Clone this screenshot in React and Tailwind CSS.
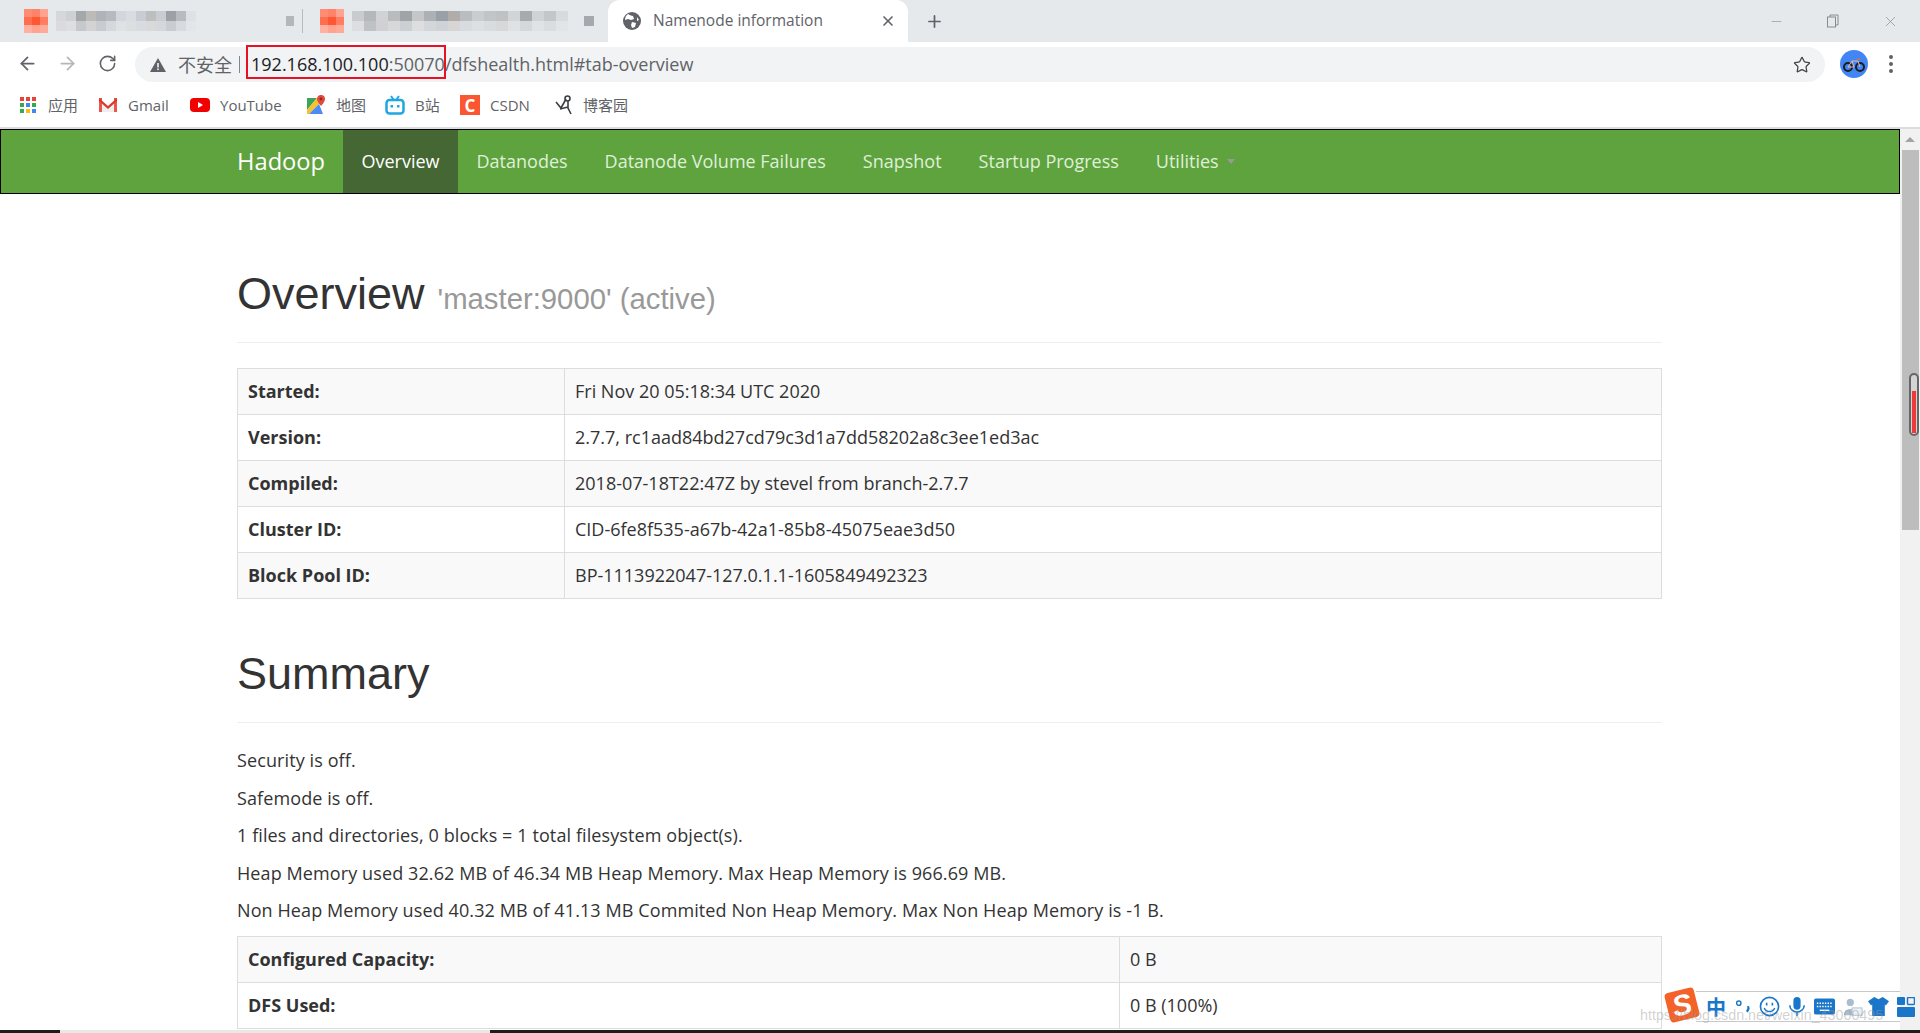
import React from 'react';
import { ArrowLeft, ArrowRight, RotateCw, Star, X, Plus, Minus } from 'lucide-react';

const uiFont = "font-['Open_Sans','Noto_Sans_CJK_SC',sans-serif]";
const headFont = "font-['Liberation_Sans','Noto_Sans_CJK_SC',sans-serif]";

const favicon = [
  'bg-[#ff8c73]', 'bg-[#ff8368]', 'bg-[#ffa28f]',
  'bg-[#ff6f4f]', 'bg-[#ff5733]', 'bg-[#ff7d60]',
  'bg-[#ffb0a0]', 'bg-[#ffa28f]', 'bg-[#ffaa98]',
];

const blurA = [
  'bg-[#d5d7da]', 'bg-[#ced1d3]', 'bg-[#a4a8aa]', 'bg-[#bcbbb8]', 'bg-[#b0b4b8]', 'bg-[#b7bac0]', 'bg-[#d3d7db]', 'bg-[#d9dce0]', 'bg-[#c9cdd3]', 'bg-[#bdbfbe]', 'bg-[#c9ccd0]', 'bg-[#9da1a6]', 'bg-[#b8bcc0]', 'bg-[#dfe2e5]',
  'bg-[#d9dbde]', 'bg-[#dcdee0]', 'bg-[#c6c9cb]', 'bg-[#d2d3d2]', 'bg-[#c8cbcf]', 'bg-[#d6d8db]', 'bg-[#dfe2e5]', 'bg-[#dcdfe2]', 'bg-[#d8dbdf]', 'bg-[#d8d9d9]', 'bg-[#d5d7da]', 'bg-[#c9ccd0]', 'bg-[#d8dbde]', 'bg-[#e3e6e9]',
];

const blurB = [
  'bg-[#c9cccf]', 'bg-[#b5b8bb]', 'bg-[#d0d2d5]', 'bg-[#b9bcbf]', 'bg-[#a0a3a7]', 'bg-[#c4c6c8]', 'bg-[#adb1b6]', 'bg-[#9aa0a8]', 'bg-[#b0acaa]', 'bg-[#b9bdc1]', 'bg-[#c9cdd0]', 'bg-[#c2c5c8]', 'bg-[#bfc1c2]', 'bg-[#d2d5d8]', 'bg-[#a8abae]', 'bg-[#d0d3d6]', 'bg-[#c4c7ca]', 'bg-[#d8dbde]',
  'bg-[#dcdee1]', 'bg-[#bfc2c5]', 'bg-[#cfd1d4]', 'bg-[#d6d8da]', 'bg-[#cdd0d3]', 'bg-[#dcdee0]', 'bg-[#d4d7da]', 'bg-[#cfd2d6]', 'bg-[#d8d6d5]', 'bg-[#d9dbde]', 'bg-[#dde0e2]', 'bg-[#d9dcde]', 'bg-[#d6d8da]', 'bg-[#dfe1e4]', 'bg-[#d5d8da]', 'bg-[#e0e3e5]', 'bg-[#dadde0]', 'bg-[#e2e5e8]',
];

function Favicon() {
  return (
    <div className="grid grid-cols-3 w-[24px] h-[24px] shrink-0">
      {favicon.map((c, i) => <div key={i} className={c} />)}
    </div>
  );
}

function GlobeIcon() {
  return (
    <svg width="18" height="18" viewBox="0 0 18 18" className="shrink-0">
      <circle cx="9" cy="9" r="9" fill="#5f6368" />
      <path d="M5 2 Q8 4 10 4 L11 7 L8 8 L5 7 L2 8 Q2 4 5 2Z M9 10 L13 11 L12 15 L9 16 L8 13Z M14 5 L16 8 L14 9Z" fill="#fff" />
    </svg>
  );
}

function RestoreIcon() {
  return (
    <svg width="14" height="14" viewBox="0 0 14 14" fill="none" stroke="#8a8a8a" strokeWidth="1">
      <rect x="1.5" y="3" width="8" height="10" />
      <path d="M4 3 V1 H12 V11 H9.5" />
    </svg>
  );
}

function WarnIcon() {
  return (
    <svg width="16" height="14" viewBox="0 0 16 14" className="shrink-0">
      <path d="M8 0 L16 14 H0Z" fill="#5f6368" />
      <rect x="7.2" y="5" width="1.6" height="4.5" fill="#f1f3f4" />
      <rect x="7.2" y="10.5" width="1.6" height="1.6" fill="#f1f3f4" />
    </svg>
  );
}

function AppsIcon() {
  const dots = ['bg-[#ea4335]', 'bg-[#ea4335]', 'bg-[#ea4335]', 'bg-[#34a853]', 'bg-[#4285f4]', 'bg-[#34a853]', 'bg-[#34a853]', 'bg-[#fbbc05]', 'bg-[#4285f4]'];
  return (
    <div className="grid grid-cols-3 gap-[2px] w-[16px] shrink-0">
      {dots.map((c, i) => <div key={i} className={`h-[4px] ${c}`} />)}
    </div>
  );
}

function GmailIcon() {
  return (
    <svg width="20" height="16" viewBox="0 0 20 16" className="shrink-0">
      <path d="M1 1 H4 V15 H1Z M16 1 H19 V15 H16Z" fill="#e9574a" />
      <path d="M4 5 L10 10 L16 5 V15 H4Z" fill="#eeeeee" />
      <path d="M1 1 L10 9 L19 1 V4 L10 12 L1 4Z" fill="#d9392c" />
    </svg>
  );
}

function YoutubeIcon() {
  return (
    <svg width="20" height="14" viewBox="0 0 20 14" className="shrink-0">
      <rect width="20" height="14" rx="4" fill="#f00000" />
      <path d="M8 4 L13 7 L8 10Z" fill="#fff" />
    </svg>
  );
}

function MapsIcon() {
  return (
    <svg width="20" height="20" viewBox="0 0 20 20" className="shrink-0">
      <path d="M1 3 L11 3 L1 15Z" fill="#3fa35c" />
      <path d="M1 15 L11 3 L13 9 L3 19 L1 19Z" fill="#f5c32c" />
      <path d="M3 19 L13 9 L17 19Z" fill="#4c8bf5" />
      <path d="M15 0 C12 0 11 2.500 11 4 C11 7 15 11 15 11 C15 11 19 7 19 4 C19 2 18 0 15 0Z" fill="#e2483c" />
      <circle cx="15" cy="4" r="1.400" fill="#8e2a22" />
    </svg>
  );
}

function BiliIcon() {
  return (
    <svg width="20" height="20" viewBox="0 0 20 20" fill="none" className="shrink-0">
      <rect x="1.500" y="5" width="17" height="13.500" rx="3" stroke="#1ea7e0" strokeWidth="2.500" />
      <path d="M6 1 L8.500 4.500 M14 1 L11.500 4.500" stroke="#1ea7e0" strokeWidth="2" />
      <rect x="5.500" y="10" width="2.500" height="2.500" fill="#1ea7e0" />
      <rect x="12" y="10" width="2.500" height="2.500" fill="#1ea7e0" />
    </svg>
  );
}

function CnblogsIcon() {
  return (
    <svg width="18" height="20" viewBox="0 0 18 20" fill="none" stroke="#3c4043" strokeWidth="1.600" className="shrink-0">
      <path d="M1 7 L6 13 L11 4" />
      <circle cx="12.500" cy="3.500" r="2.500" />
      <path d="M13 6 L13 13 L16 19 M13 12 L5 14" />
    </svg>
  );
}

function AvatarIcon() {
  return (
    <svg width="28" height="28" viewBox="0 0 28 28" fill="none" className="shrink-0">
      <circle cx="14" cy="14" r="14" fill="#4285f4" />
      <circle cx="8" cy="17" r="4" stroke="#1d1d1d" strokeWidth="2" />
      <circle cx="20" cy="17" r="4" stroke="#1d1d1d" strokeWidth="2" />
      <path d="M8 17 L12 11 H18 L20 17 M12 11 L14 17 H8" stroke="#e8b7a0" strokeWidth="1" />
      <path d="M17 9 H20" stroke="#e06a4a" strokeWidth="1.500" />
    </svg>
  );
}

function SogouLogo() {
  return (
    <div className="absolute left-[1667px] top-[990px] w-[30px] h-[30px] bg-[#f4622a] rounded-[4px] -rotate-[14deg] flex items-center justify-center">
      <span className={`${headFont} text-white font-bold italic text-[29px] leading-none`}>S</span>
    </div>
  );
}

function ImeIcons() {
  const blue = '#1a76c9';
  return (
    <div className="absolute left-[1696px] top-[991px] w-[222px] h-[31px]">
      <div className="absolute inset-y-0 left-0 w-[204px] bg-white border-y border-[#c5c8cc]" />
      <div className="relative h-full flex items-center pl-[10px]">
        <span className="font-['Noto_Sans_CJK_SC',sans-serif] font-bold text-[20px] leading-none text-[#1a76c9] w-[20px]">中</span>
        <svg width="17" height="18" viewBox="0 0 18 18" fill="none" className="ml-[9px]">
          <circle cx="4" cy="5" r="2.300" stroke={blue} strokeWidth="1.500" />
          <path d="M13 9 C14.500 9 15 11 12.500 14" stroke={blue} strokeWidth="2.500" />
        </svg>
        <svg width="21" height="21" viewBox="0 0 22 22" fill="none" className="ml-[7px]">
          <circle cx="11" cy="11" r="9.500" stroke={blue} strokeWidth="1.700" />
          <path d="M8 7 V10 M14 7 V10" stroke={blue} strokeWidth="1.700" />
          <path d="M5.500 12.500 C7.500 17.500 14.500 17.500 16.500 12.500" stroke={blue} strokeWidth="1.500" />
        </svg>
        <svg width="18" height="23" viewBox="0 0 20 23" fill="none" className="ml-[8px]">
          <rect x="6" y="1" width="8" height="14" rx="4" fill={blue} />
          <path d="M2 10 C2 20 18 20 18 10 M10 18 V22" stroke={blue} strokeWidth="1.700" />
        </svg>
        <svg width="21" height="17" viewBox="0 0 22 17" className="ml-[8px]">
          <rect width="22" height="17" rx="2" fill={blue} />
          <path d="M3 5 H19 M3 8.500 H19" stroke="#fff" strokeWidth="1.500" strokeDasharray="1.500 1.300" />
          <path d="M6 12.500 H16" stroke="#fff" strokeWidth="1.500" />
        </svg>
        <svg width="20" height="20" viewBox="0 0 22 20" className="ml-[8px]">
          <circle cx="8" cy="5" r="4" fill="#a9bdd0" />
          <path d="M1 19 C1 10 15 10 15 19Z" fill="#a9bdd0" />
          <rect x="10" y="11" width="11" height="8" fill="#eef1f4" stroke="#a9bdd0" strokeWidth="1" />
        </svg>
        <svg width="21" height="19" viewBox="0 0 20 18" className="ml-[5px]">
          <path d="M6 0 L10 2 L14 0 L20 4 L17 8 L16 7 V18 H4 V7 L3 8 L0 4Z" fill={blue} />
        </svg>
        <svg width="18" height="20" viewBox="0 0 18 20" fill="none" className="ml-[8px]">
          <rect x="0" y="0" width="8" height="8" rx="1" fill={blue} />
          <rect x="10.500" y="0.500" width="7" height="7" rx="1" stroke={blue} strokeWidth="1.500" />
          <rect x="0" y="10" width="18" height="10" rx="1" fill={blue} />
        </svg>
      </div>
    </div>
  );
}

function InfoTable({ rows, labelWidth }) {
  return (
    <table className="w-full border-collapse table-fixed border border-[#ddd]">
      <colgroup><col className={labelWidth} /><col /></colgroup>
      <tbody>
        {rows.map(([k, v], i) => (
          <tr key={k} className={i % 2 === 0 ? 'bg-[#f9f9f9] h-[46px]' : 'bg-white h-[46px]'}>
            <th className="border border-[#ddd] px-[10px] text-left font-bold">{k}</th>
            <td className="border border-[#ddd] px-[10px]">{v}</td>
          </tr>
        ))}
      </tbody>
    </table>
  );
}

function Bookmark({ icon, label, className }) {
  return (
    <div className={`flex items-center gap-[10px] ${className}`}>
      {icon}
      <span>{label}</span>
    </div>
  );
}

const overview = [
  ['Started:', 'Fri Nov 20 05:18:34 UTC 2020'],
  ['Version:', '2.7.7, rc1aad84bd27cd79c3d1a7dd58202a8c3ee1ed3ac'],
  ['Compiled:', '2018-07-18T22:47Z by stevel from branch-2.7.7'],
  ['Cluster ID:', 'CID-6fe8f535-a67b-42a1-85b8-45075eae3d50'],
  ['Block Pool ID:', 'BP-1113922047-127.0.1.1-1605849492323'],
];

const summary = [
  'Security is off.',
  'Safemode is off.',
  '1 files and directories, 0 blocks = 1 total filesystem object(s).',
  'Heap Memory used 32.62 MB of 46.34 MB Heap Memory. Max Heap Memory is 966.69 MB.',
  'Non Heap Memory used 40.32 MB of 41.13 MB Commited Non Heap Memory. Max Non Heap Memory is -1 B.',
];

const capacity = [
  ['Configured Capacity:', '0 B'],
  ['DFS Used:', '0 B (100%)'],
];

const navLinks = ['Datanodes', 'Datanode Volume Failures', 'Snapshot', 'Startup Progress'];

export default function App() {
  return (
    <div className={`relative h-[1033px] w-[1920px] overflow-hidden bg-white flex flex-col ${uiFont}`}>
      {/* tab strip */}
      <div className="h-[42px] shrink-0 bg-[#e6e9ec] flex items-center">
        <div className="w-[286px] pl-[24px] flex items-center gap-[8px] shrink-0">
          <Favicon />
          <div className="grid grid-cols-[repeat(14,10px)] grid-rows-2 h-[20px]">
            {blurA.map((c, i) => <div key={i} className={c} />)}
          </div>
        </div>
        <div className="w-[34px] shrink-0 flex items-center gap-[8px]">
          <div className="w-[8px] h-[10px] bg-[#b4b7ba]" />
          <div className="w-[1px] h-[24px] bg-[#b9bcbf]" />
        </div>
        <div className="w-[288px] flex items-center gap-[8px] shrink-0">
          <Favicon />
          <div className="grid grid-cols-[repeat(18,12px)] grid-rows-2 h-[20px]">
            {blurB.map((c, i) => <div key={i} className={c} />)}
          </div>
          <div className="ml-[8px] w-[10px] h-[10px] bg-[#a5a9ad]" />
        </div>
        <div className="w-[300px] h-[42px] mt-auto bg-white rounded-t-[12px] flex items-center pl-[15px] pr-[12px] gap-[12px] text-[15.500px] text-[#5f6368] shrink-0">
          <GlobeIcon />
          <span className="flex-1">Namenode information</span>
          <X size={16} strokeWidth={2.500} />
        </div>
        <Plus size={19} strokeWidth={2.200} className="ml-[17px] text-[#5f6368]" />
        <div className="ml-auto flex items-center gap-[42px] pr-[21px] text-[#8a8a8a]">
          <Minus size={15} strokeWidth={1} />
          <RestoreIcon />
          <X size={17} strokeWidth={1} />
        </div>
      </div>

      {/* toolbar */}
      <div className="h-[43px] shrink-0 flex items-center pl-[17px] pr-[18px]">
        <ArrowLeft size={21} className="text-[#5f6368]" />
        <ArrowRight size={21} className="ml-[19px] text-[#b4b7ba]" />
        <RotateCw size={19} className="ml-[20px] text-[#5f6368]" />
        <div className="relative ml-[18px] w-[1690px] h-[35px] mb-[-2px] bg-[#f1f3f4] rounded-full flex items-center pl-[15px] pr-[14px] text-[18px] text-[#5f6368]">
          <WarnIcon />
          <span className="ml-[12px] font-['Noto_Sans_CJK_SC',sans-serif] text-[18px]">不安全</span>
          <span className="ml-[7px] mr-[11px] w-[1px] h-[17px] bg-[#80868b]" />
          <span className="text-[#202124]">192.168.100.100</span>
          <span>:50070/dfshealth.html#tab-overview</span>
          <Star size={18} strokeWidth={1.700} className="ml-auto text-[#444]" />
          <div className="absolute left-[111px] top-[-2px] w-[200px] h-[34px] border-2 border-[#e81123]" />
        </div>
        <div className="ml-[15px]"><AvatarIcon /></div>
        <div className="ml-[21px] flex flex-col gap-[3px]">
          <div className="w-[4px] h-[4px] rounded-full bg-[#5f6368]" />
          <div className="w-[4px] h-[4px] rounded-full bg-[#5f6368]" />
          <div className="w-[4px] h-[4px] rounded-full bg-[#5f6368]" />
        </div>
      </div>

      {/* bookmarks */}
      <div className="h-[42px] shrink-0 flex items-center pl-[20px] pb-[2px] text-[15px] text-[#5f6368] font-['Open_Sans','Noto_Sans_CJK_SC',sans-serif]">
        <Bookmark icon={<AppsIcon />} label="应用" className="w-[78px] gap-[12px]" />
        <Bookmark icon={<GmailIcon />} label="Gmail" className="w-[92px]" />
        <Bookmark icon={<YoutubeIcon />} label="YouTube" className="w-[116px]" />
        <Bookmark icon={<MapsIcon />} label="地图" className="w-[79px]" />
        <Bookmark icon={<BiliIcon />} label="B站" className="w-[75px]" />
        <Bookmark
          icon={<span className="w-[20px] h-[20px] bg-[#fc5531] text-white text-[17px] leading-none font-bold flex items-center justify-center">C</span>}
          label="CSDN"
          className="w-[95px]"
        />
        <Bookmark icon={<CnblogsIcon />} label="博客园" className="gap-[7px]" />
      </div>

      <div className="h-[2px] shrink-0 bg-[#dadce0]" />

      {/* page + scrollbar */}
      <div className="flex-1 min-h-0 flex">
        <div className="flex-1 min-w-0 overflow-hidden">
          <nav className="h-[65px] bg-[#5fa33e] border border-black flex items-stretch pl-[236px] text-[18px] text-[#dff0d8]">
            <div className="w-[106px] flex items-center text-white text-[23.700px]">Hadoop</div>
            <div className="px-[18.500px] flex items-center bg-[#446733] text-white">Overview</div>
            {navLinks.map((l) => (
              <div key={l} className="px-[18.500px] flex items-center">{l}</div>
            ))}
            <div className="px-[18.500px] flex items-center gap-[8px]">
              Utilities
              <span className="w-0 h-0 border-x-[4px] border-x-transparent border-t-[5px] border-t-[#999]" />
            </div>
          </nav>

          <main className="w-[1425px] ml-[237px] text-[18px] text-[#333]">
            <div className={`mt-[49px] h-[100px] border-b border-[#eee] flex items-baseline pt-[26px] ${headFont}`}>
              <h1 className="text-[45px] leading-[50px] font-normal">Overview</h1>
              <span className="ml-[13px] text-[29.300px] text-[#999]">'master:9000' (active)</span>
            </div>
            <div className="mt-[25px]">
              <InfoTable rows={overview} labelWidth="w-[327px]" />
            </div>
            <div className={`mt-[25px] h-[99px] border-b border-[#eee] flex items-end pb-[23px] ${headFont}`}>
              <h1 className="text-[45px] leading-[50px] font-normal">Summary</h1>
            </div>
            <div className="mt-[19px] flex flex-col tracking-[0.1px]">
              {summary.map((s) => (
                <p key={s} className="h-[37.500px] leading-[37.500px]">{s}</p>
              ))}
            </div>
            <div className="mt-[6px]">
              <InfoTable rows={capacity} labelWidth="w-[882px]" />
            </div>
          </main>
        </div>

        <div className="relative w-[20px] shrink-0 bg-[#f1f1f1] flex flex-col items-center pt-[8px]">
          <div className="w-0 h-0 border-x-[5px] border-x-transparent border-b-[5px] border-b-[#a3a3a3]" />
          <div className="mt-[8px] w-[17px] h-[380px] bg-[#bdbdbd]" />
          <div className="absolute left-[9px] top-[244px] w-[10px] h-[63px] bg-[#d4d4d4] border-2 border-[#666] rounded-[5px] flex flex-col justify-end items-center pb-[1px]">
            <div className="w-[4px] h-[42px] bg-[#f03a3a]" />
          </div>
        </div>
      </div>

      {/* taskbar sliver */}
      <div className="h-[3px] shrink-0 flex bg-[#1d1d1d]">
        <div className="w-[60px]" />
        <div className="w-[430px] bg-[#e8e8e8]" />
      </div>

      {/* ime toolbar and watermark float over the page */}
      <ImeIcons />
      <SogouLogo />
      <div className={`absolute left-[1640px] top-[1005px] text-[14.300px] leading-[20px] text-[#9a9a9a]/45 ${headFont}`}>
        https://blog.csdn.net/weixin_43000495
      </div>
    </div>
  );
}
